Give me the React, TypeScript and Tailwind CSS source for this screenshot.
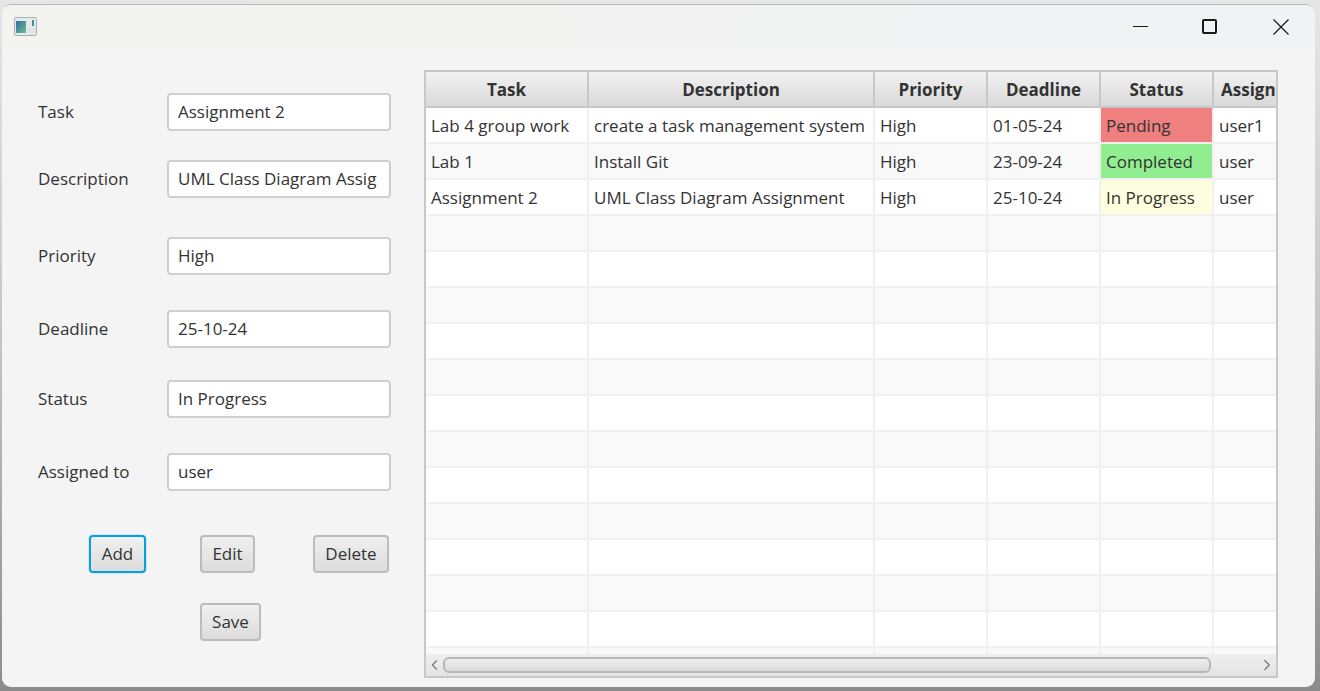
import React from 'react';
import { ChevronLeft, ChevronRight } from 'lucide-react';

const font = 'font-["Open_Sans","Noto_Sans",sans-serif]';

const fields = [
  { label: 'Task', value: 'Assignment 2', spacing: 'mt-[45px]' },
  { label: 'Description', value: 'UML Class Diagram Assignment', spacing: 'mt-[29px]' },
  { label: 'Priority', value: 'High', spacing: 'mt-[39px]' },
  { label: 'Deadline', value: '25-10-24', spacing: 'mt-[35px]' },
  { label: 'Status', value: 'In Progress', spacing: 'mt-[32px]' },
  { label: 'Assigned to', value: 'user', spacing: 'mt-[35px]' },
];

const columns = ['Task', 'Description', 'Priority', 'Deadline', 'Status'];

const tasks = [
  { task: 'Lab 4 group work', description: 'create a task management system', priority: 'High', deadline: '01-05-24', status: 'Pending', statusColor: 'bg-[#f08080]', user: 'user1' },
  { task: 'Lab 1', description: 'Install Git', priority: 'High', deadline: '23-09-24', status: 'Completed', statusColor: 'bg-[#90ee90]', user: 'user' },
  { task: 'Assignment 2', description: 'UML Class Diagram Assignment', priority: 'High', deadline: '25-10-24', status: 'In Progress', statusColor: 'bg-[#ffffe0]', user: 'user' },
];

const gridCols = 'grid grid-cols-[163px_286px_113px_113px_113px_64px]';
const cell = 'h-[36px] border-r-2 border-b-2 border-[#f0f0f0] pl-[5px] leading-[35px] whitespace-nowrap overflow-hidden';
const headCell = 'h-[36px] border-r-2 border-b-2 border-[#c8c8c8] bg-gradient-to-b from-[#f2f2f2] to-[#d9d9d9] text-[17px] font-bold leading-[36px] text-[#333] whitespace-nowrap overflow-hidden';

function FxButton({ label, width, focused }: { label: string; width: string; focused?: boolean }) {
  return (
    <button
      className={`${width} h-[38px] rounded-[4px] border-2 bg-gradient-to-b from-[#f0f0f0] to-[#dcdcdc] text-[17px] text-[#333] ${
        focused ? 'border-[#0a9fdc] shadow-[0_0_0_1px_#cfe9f5]' : 'border-[#bcbcbc]'
      }`}
    >
      {label}
    </button>
  );
}

function AppIcon() {
  return (
    <svg width="23" height="19" viewBox="0 0 23 19">
      <defs>
        <linearGradient id="tile" x1="0" y1="0" x2="1" y2="1">
          <stop offset="0" stopColor="#2f6f9f" />
          <stop offset="1" stopColor="#6fc08a" />
        </linearGradient>
      </defs>
      <rect x="0.5" y="0.5" width="22" height="18" rx="1.5" fill="#e6eaec" stroke="#a9b0b5" />
      <rect x="2" y="4" width="10" height="12" fill="url(#tile)" />
      <rect x="14" y="11" width="7" height="5" fill="#dfe4e6" />
      <rect x="18" y="3" width="2" height="6" fill="#3f8f9a" />
    </svg>
  );
}

export default function App() {
  const emptyRows = Array.from({ length: 13 }, (_, i) => i);

  return (
    <div className={`w-[1320px] h-[691px] overflow-hidden bg-gradient-to-b from-[#e6e6e6] via-[#c4c4c4] to-[#8c8c8c] pt-[4px] pl-[2px] pr-[5px] pb-[4px] ${font}`}>
      <div className="flex flex-col h-full rounded-[9px] overflow-hidden border-t border-[#b8b8b8] bg-[#f4f4f4]">
        {/* Title bar */}
        <div className="flex items-center justify-between h-[43px] shrink-0 bg-gradient-to-r from-[#f3f3ef] to-[#f1f2f5] pl-[12px]">
          <AppIcon />
          <div className="flex items-center">
            <div className="w-[70px] flex justify-center">
              <div className="w-[15px] h-[1px] bg-[#1a1a1a]" />
            </div>
            <div className="w-[68px] flex justify-center">
              <div className="w-[15px] h-[15px] rounded-[2px] border-2 border-[#1a1a1a]" />
            </div>
            <div className="w-[72px] pl-[4px] flex justify-center">
              <svg width="16" height="16" viewBox="0 0 16 16" stroke="#1a1a1a" strokeWidth="1.3">
                <path d="M0.5 0.5 L15.5 15.5 M15.5 0.5 L0.5 15.5" />
              </svg>
            </div>
          </div>
        </div>

        <div className="flex flex-1 min-h-0">
          {/* Form */}
          <div className="w-[422px] shrink-0 pl-[36px]">
            {fields.map(f => (
              <div key={f.label} className={`flex items-center h-[38px] ${f.spacing}`}>
                <span className="w-[129px] text-[17px] text-[#333] -mt-[1px]">{f.label}</span>
                <div className="w-[224px] h-[38px] rounded-[4px] border-2 border-[#cfcfcf] bg-white pl-[9px] pr-[12px] text-[17px] leading-[33px] text-[#333]">
                  <div className="overflow-hidden whitespace-nowrap">{f.value}</div>
                </div>
              </div>
            ))}
            <div className="flex mt-[44px] ml-[51px]">
              <FxButton label="Add" width="w-[57px]" focused />
              <div className="ml-[54px]">
                <FxButton label="Edit" width="w-[55px]" />
              </div>
              <div className="ml-[58px]">
                <FxButton label="Delete" width="w-[76px]" />
              </div>
            </div>
            <div className="mt-[30px] ml-[162px]">
              <FxButton label="Save" width="w-[61px]" />
            </div>
          </div>

          {/* Table */}
          <div className="flex flex-col w-[854px] h-[608px] mt-[22px] border-2 border-[#c8c8c8] bg-white overflow-hidden">
            <div className={`${gridCols} shrink-0 h-[36px] w-[852px] overflow-hidden`}>
              {columns.map(c => (
                <div key={c} className={`${headCell} text-center`}>
                  {c}
                </div>
              ))}
              <div className={`${headCell} pl-[7px]`}>Assigned to</div>
            </div>
            <div className="flex-1 min-h-0 overflow-hidden text-[17px] text-[#333]">
              {tasks.map((t, i) => (
                <div key={t.task} className={`${gridCols} ${i % 2 === 0 ? 'bg-white' : 'bg-[#f9f9f9]'}`}>
                  <div className={cell}>{t.task}</div>
                  <div className={cell}>{t.description}</div>
                  <div className={cell}>{t.priority}</div>
                  <div className={cell}>{t.deadline}</div>
                  <div className={`${cell} ${t.statusColor}`}>{t.status}</div>
                  <div className={cell}>{t.user}</div>
                </div>
              ))}
              {emptyRows.map(i => (
                <div key={i} className={`${gridCols} ${i % 2 === 0 ? 'bg-[#f9f9f9]' : 'bg-white'}`}>
                  <div className={cell} />
                  <div className={cell} />
                  <div className={cell} />
                  <div className={cell} />
                  <div className={cell} />
                  <div className={cell} />
                </div>
              ))}
            </div>
            {/* Horizontal scrollbar */}
            <div className="flex items-center shrink-0 h-[22px] bg-gradient-to-b from-[#eeeeee] to-[#e4e4e4]">
              <ChevronLeft size={18} strokeWidth={1.6} className="w-[17px] shrink-0 text-[#777]" />
              <div className="w-[768px] h-[16px] rounded-[6px] border-2 border-[#b8b8b8] bg-gradient-to-b from-[#efefef] to-[#dadada]" />
              <div className="flex-1 flex justify-end">
                <ChevronRight size={18} strokeWidth={1.6} className="text-[#777]" />
              </div>
            </div>
          </div>
        </div>
      </div>
    </div>
  );
}
